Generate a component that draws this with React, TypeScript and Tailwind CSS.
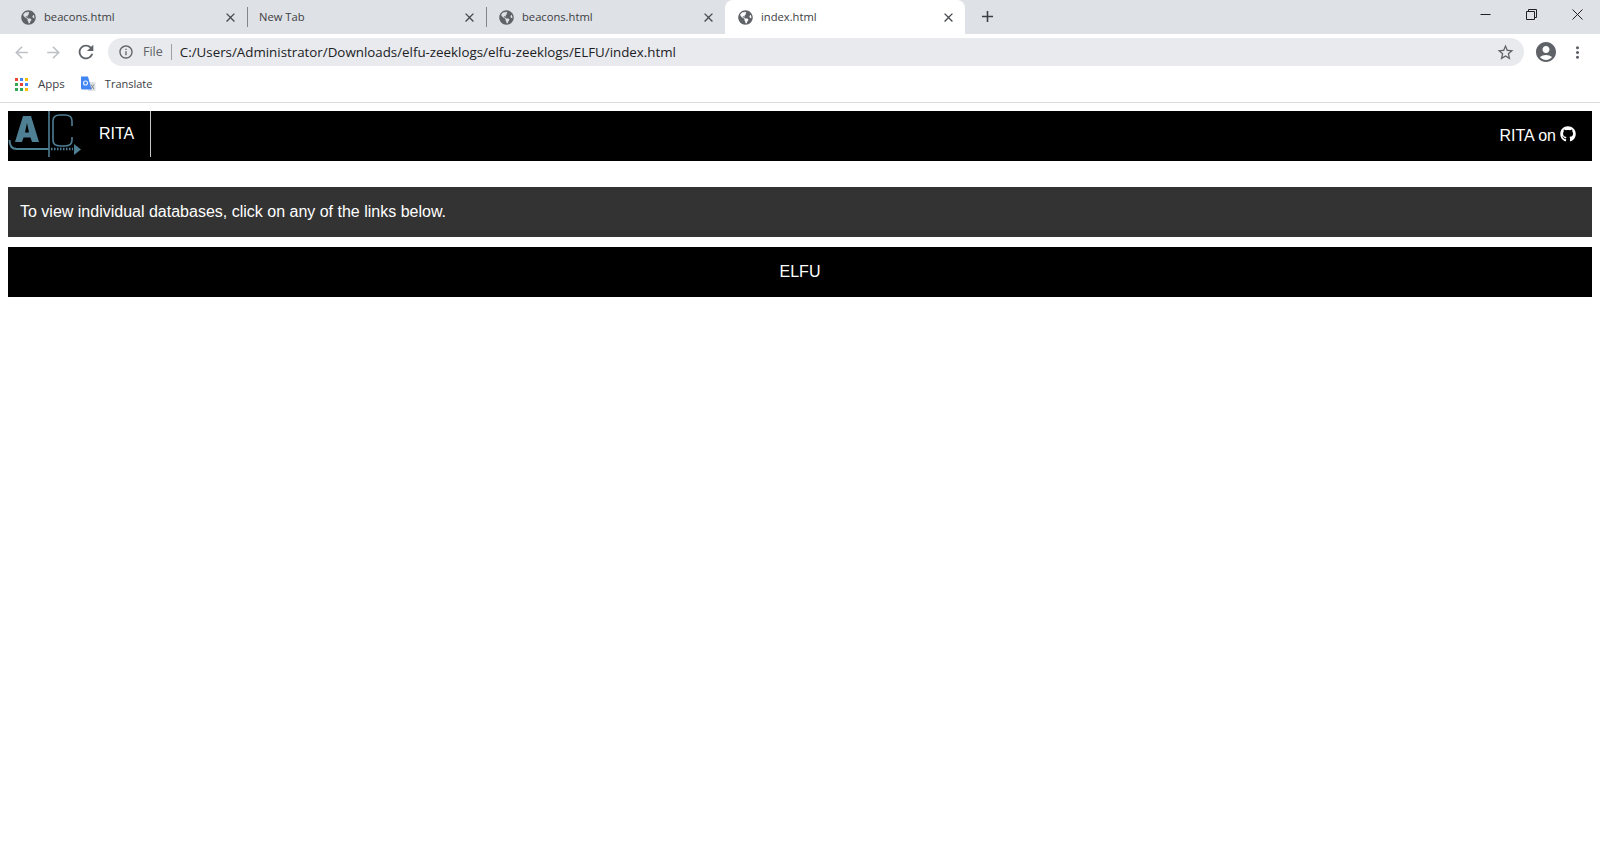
import React from "react";
import { FaGlobeAmericas, FaGithub } from "react-icons/fa";
import { MdAccountCircle, MdStarBorder, MdMoreVert, MdInfoOutline, MdRefresh, MdArrowBack, MdArrowForward, MdClose, MdAdd } from "react-icons/md";

const ui = "font-['Open_Sans','Noto_Sans',sans-serif]";

function Tab({ title, icon = true, divider = true, active = false, width = "w-[239px]" }: { title: string; icon?: boolean; divider?: boolean; active?: boolean; width?: string }) {
  return (
    <div className={`relative flex items-center h-[34px] ${width} ${active ? "bg-white rounded-t-[8px]" : ""}`}>
      {icon ? <FaGlobeAmericas className={`ml-[13px] w-[15px] h-[15px] text-[#5f6368] shrink-0`} /> : <span className="w-[12px] shrink-0" />}
      <span className={`${icon ? "ml-[8px]" : ""} text-[11.2px] text-[#3c4043] ${ui} truncate flex-1`}>{title}</span>
      <MdClose className="mr-[9px] w-[15px] h-[15px] text-[#45484c] shrink-0" />
      {divider && <span className="absolute right-[-1px] top-[7px] w-px h-[20px] bg-[#80868b]" />}
    </div>
  );
}

function Logo() {
  return (
    <svg width="74" height="46" viewBox="0 0 74 46" className="shrink-0">
      <path d="M7 31 L15 5 H23 L31 31 H24 L22.5 26.5 H15.5 L14 31 Z M17 21.5 H21 L19 12 Z" fill="#4f7f93" fillRule="evenodd" />
      <path d="M1.5 29 C1.5 35 4 38 9 38 H41" stroke="#4f7f93" strokeWidth="2" fill="none" />
      <path d="M41 0 V46" stroke="#4f7f93" strokeWidth="1.6" />
      <path d="M64 15 V10 C64 6 61 4 57 4 H52 C48 4 45 6 45 10 V29 C45 33 48 35 52 35 H57 C61 35 64 33 64 29 V26" stroke="#4f7f93" strokeWidth="1.6" fill="none" />
      <path d="M43 38 H65" stroke="#4f7f93" strokeWidth="2.4" strokeDasharray="1.5 1.5" />
      <path d="M66 33 L73 38.5 L66 44 Z" fill="#4f7f93" />
    </svg>
  );
}

function Translate() {
  return (
    <svg width="16" height="16" viewBox="0 0 16 16" className="shrink-0">
      <path d="M9 6 H15.5 V15 H8 Z" fill="#dfe1e5" />
      <path d="M11 8.5 L14 13 M14 8.5 L11 13" stroke="#80868b" strokeWidth="1" />
      <path d="M1 0.5 H8 L11.5 13.5 H2.5 Q1 13.5 1 12 Z" fill="#4285f4" />
      <circle cx="5.5" cy="7" r="2" fill="none" stroke="#e8f0fe" strokeWidth="1.1" />
    </svg>
  );
}

function Apps() {
  const colors = ["bg-[#ea4335]", "bg-[#4285f4]", "bg-[#fbbc05]", "bg-[#34a853]", "bg-[#ea4335]", "bg-[#4285f4]", "bg-[#34a853]", "bg-[#34a853]", "bg-[#fbbc05]"];
  return (
    <div className="grid grid-cols-3 gap-[2px] w-[13px] h-[13px] shrink-0">
      {colors.map((c, i) => <span key={i} className={`w-[3px] h-[3px] ${c}`} />)}
    </div>
  );
}

export default function App() {
  return (
    <div className="min-h-[860px] bg-white font-['Liberation_Sans',Arial,sans-serif]">
      <div className="flex h-[34px] bg-[#dee1e6] pl-[8px]">
        <Tab title="beacons.html" />
        <Tab title="New Tab" icon={false} />
        <Tab title="beacons.html" divider={false} />
        <Tab title="index.html" active divider={false} width="w-[240px]" />
        <MdAdd className="ml-[13px] mt-[7px] w-[19px] h-[19px] text-[#3c4043]" />
        <div className="ml-auto flex h-[28px] text-[#202124]">
          <div className="w-[46px] flex items-center justify-center">
            <svg width="11" height="11" viewBox="0 0 11 11"><path d="M0.5 5.5 H10.5" stroke="currentColor" /></svg>
          </div>
          <div className="w-[46px] flex items-center justify-center">
            <svg width="11" height="11" viewBox="0 0 11 11" fill="none" stroke="currentColor"><path d="M0.5 2.5 H8.5 V10.5 H0.5 Z M2.5 2.5 V0.5 H10.5 V8.5 H8.5" /></svg>
          </div>
          <div className="w-[46px] flex items-center justify-center">
            <svg width="11" height="11" viewBox="0 0 11 11" stroke="currentColor"><path d="M0.5 0.5 L10.5 10.5 M10.5 0.5 L0.5 10.5" /></svg>
          </div>
        </div>
      </div>

      <div className="flex items-center h-[32px] pt-[4px]">
        <MdArrowBack className="ml-[12px] w-[19px] h-[19px] text-[#bdc1c6]" />
        <MdArrowForward className="ml-[13px] w-[19px] h-[19px] text-[#bdc1c6]" />
        <MdRefresh className="ml-[12px] w-[22px] h-[22px] text-[#5f6368]" />
        <div className={`ml-[11px] flex items-center w-[1416px] h-[28px] rounded-full bg-[#e8eaed] ${ui}`}>
          <MdInfoOutline className="ml-[10px] w-[16px] h-[16px] text-[#5f6368]" />
          <span className="ml-[9px] text-[12.5px] text-[#5f6368]">File</span>
          <span className="ml-[8px] w-px h-[16px] bg-[#9aa0a6]" />
          <span className="ml-[8px] mt-[1px] text-[13.33px] text-[#202124]">C:/Users/Administrator/Downloads/elfu-zeeklogs/elfu-zeeklogs/ELFU/index.html</span>
          <MdStarBorder className="ml-auto mr-[9px] w-[19px] h-[19px] text-[#5f6368]" />
        </div>
        <MdAccountCircle className="ml-[10px] w-[24px] h-[24px] text-[#5f6368]" />
        <MdMoreVert className="ml-[10px] w-[19px] h-[19px] text-[#5f6368]" />
      </div>

      <div className={`flex items-center h-[36px] border-b-0 ${ui}`}>
        <div className="ml-[15px]"><Apps /></div>
        <span className="ml-[10px] text-[11.5px] text-[#3c4043]">Apps</span>
        <div className="ml-[15px]"><Translate /></div>
        <span className="ml-[9px] text-[11px] text-[#3c4043]">Translate</span>
      </div>
      <div className="h-px bg-[#d9dbdd]" />

      <div className="px-[8px] pt-[8px]">
        <div className="flex items-start h-[50px] bg-black text-white">
          <div className="flex items-center h-[46px] w-[143px] border-r border-[#c8c8c8]">
            <Logo />
            <span className="ml-[17px] mt-[-1px] text-[16px]">RITA</span>
          </div>
          <div className="ml-auto mr-[16px] mt-[16px] flex items-center gap-[4px] text-[16px] leading-[18px]">
            <span>RITA on</span>
            <FaGithub className="w-[16px] h-[16px] mt-[-5px]" />
          </div>
        </div>
        <div className="mt-[26px] flex items-center h-[50px] pl-[12px] bg-[#333333] text-white text-[16px]">
          To view individual databases, click on any of the links below.
        </div>
        <div className="mt-[10px] flex items-center justify-center h-[50px] bg-black text-white text-[16px]">
          ELFU
        </div>
      </div>
    </div>
  );
}
